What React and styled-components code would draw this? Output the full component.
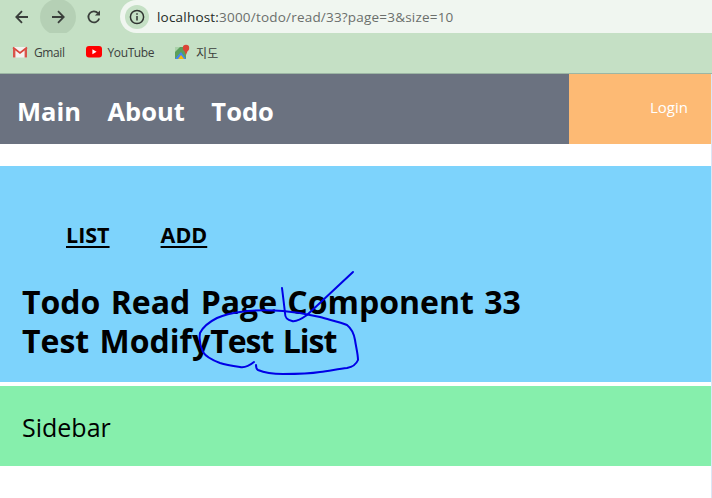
import React from "react";
import styled, { createGlobalStyle } from "styled-components";

const Global = createGlobalStyle`
  html, body { margin: 0; padding: 0; background: #fff; }
  body { width: 712px; height: 498px; overflow: hidden; font-family: "Open Sans", "Noto Sans CJK KR", sans-serif; }
`;
const Page = styled.div`display: flex; flex-direction: column; width: 712px; height: 498px; overflow: hidden;`;
const Toolbar = styled.div`display: flex; align-items: center; height: 33px; background: #c5e0c5; flex: none; padding-left: 4px;`;
const NavBtn = styled.div`
  width: 36px; height: 36px; flex: none; display: flex; align-items: center; justify-content: center;
  border-radius: 50%;
  background: ${p => p.$active ? "#b5d0b5" : "transparent"}; color: #3a3f3b;
`;
const Omni = styled.div`
  display: flex; align-items: center; flex: 1; height: 33px; margin-left: 8px; background: #f0f6f0;
  border-radius: 17px 0 0 17px; padding-left: 5px;
  font-family: "Open Sans", sans-serif; font-size: 13.5px; letter-spacing: 0.2px;
`;
const InfoBadge = styled.div`
  width: 24px; height: 24px; border-radius: 50%; background: #c5e0c5; display: flex; align-items: center; justify-content: center; margin-right: 8px;
`;
const Host = styled.span`color: #262b27;`;
const Rest = styled.span`color: #6b6f6c;`;
const Bookmarks = styled.div`
  display: flex; align-items: center; height: 41px; box-sizing: border-box; padding: 0 0 2px 12px; background: #c5e0c5; flex: none;
  border-bottom: 1px solid #9cb6a4;
`;
const Bookmark = styled.div`
  display: flex; align-items: center; gap: 6px; margin-right: ${p => p.$mr}px; font-size: 12px; color: #3c403d; font-family: "Open Sans", sans-serif; letter-spacing: -0.4px;
`;
const KrLabel = styled.span`font-family: "Noto Sans CJK KR", sans-serif; letter-spacing: 0;`;
const Viewport = styled.div`
  flex: 1; display: flex; flex-direction: column; border-right: 1px solid #dbe6f6; width: 711px;
`;
const Header = styled.header`display: flex; height: 70px; flex: none;`;
const MainNav = styled.nav`
  width: 569px; background: #6b7280; display: flex; align-items: center; gap: 26.5px; padding: 5px 0 0 17px; box-sizing: border-box;
`;
const NavLink = styled.span`color: #fff; font-weight: 700; font-size: 25.5px; line-height: 1;`;
const LoginBox = styled.div`
  flex: 1; background: #fdba74; display: flex; align-items: center; justify-content: flex-end; padding: 0 23px 4px 0;
  color: #fff; font-size: 15px;
`;
const Body = styled.main`
  flex: 1; margin-top: 22px; display: flex; flex-direction: column; gap: 4px;
`;
const Content = styled.section`
  position: relative; height: 216px; background: #7dd3fc; display: flex; flex-direction: column; padding: 0 0 0 22px; box-sizing: border-box;
`;
const SubNav = styled.div`display: flex; gap: 51px; padding: 54px 0 0 44px; height: 83px; box-sizing: border-box;`;
const SubLink = styled.span`color: #000; font-weight: 700; font-size: 21.5px; line-height: 29px; text-decoration: underline; text-decoration-thickness: 2px; text-underline-offset: 3px;`;
const Title = styled.h1`
  margin: 0; color: #000; font-weight: 700; font-size: 32px; line-height: 39px; padding-top: 33px; word-spacing: 2px;
`;
const TightTitle = styled.span`letter-spacing: -1px;`;
const Scribble = styled.svg`position: absolute; left: 0; top: 0; pointer-events: none;`;
const Sidebar = styled.aside`
  height: 80px; background: #86efac; display: flex; align-items: center; padding: 2px 0 0 22px; box-sizing: border-box; font-size: 25px; color: #000;
`;

export default function App() {
  return (
    <Page>
      <Global />
      <Toolbar>
        <NavBtn>
          <svg width="16" height="16" viewBox="0 0 16 16" fill="none" stroke="currentColor" strokeWidth="1.8"><path d="M14 8H2.5M8 2.2 2.3 8 8 13.8" /></svg>
        </NavBtn>
        <NavBtn $active>
          <svg width="16" height="16" viewBox="0 0 16 16" fill="none" stroke="currentColor" strokeWidth="1.8"><path d="M2 8h11.5M8 2.2 13.7 8 8 13.8" /></svg>
        </NavBtn>
        <NavBtn>
          <svg width="16" height="16" viewBox="0 0 16 16" fill="none" stroke="currentColor" strokeWidth="1.8"><path d="M13.2 9.5A5.5 5.5 0 1 1 12 4.2" /><path d="M14 1.5V6.6H8.9" fill="currentColor" stroke="none" /></svg>
        </NavBtn>
        <Omni>
          <InfoBadge>
            <svg width="16" height="16" viewBox="0 0 16 16" fill="none" stroke="#2f3330" strokeWidth="1.5"><circle cx="8" cy="8" r="6.6" /><path d="M8 7v4.6M8 4.2v1.5" /></svg>
          </InfoBadge>
          <Host>localhost:</Host><Rest>3000/todo/read/33?page=3&amp;size=10</Rest>
        </Omni>
      </Toolbar>
      <Bookmarks>
        <Bookmark $mr={21}>
          <svg width="16" height="12" viewBox="0 0 16 12"><path d="M1 1h14v10.5H1z" fill="#f4f2f0" /><path d="M1 1.5 8 7l7-5.5" fill="none" stroke="#d9443a" strokeWidth="1.7" /><path d="M1 1v10.5h2.4V3.5M15 1v10.5h-2.4V3.5" fill="#d9544a" /></svg>
          Gmail
        </Bookmark>
        <Bookmark $mr={21}>
          <svg width="16" height="12" viewBox="0 0 16 12"><rect width="16" height="11.5" rx="3" fill="#f00" /><path d="M6.4 3.3v5l4.2-2.5z" fill="#fff" /></svg>
          YouTube
        </Bookmark>
        <Bookmark $mr={0}>
          <svg width="15" height="16" viewBox="0 0 15 16"><path d="M0 3h11v12H0z" fill="#5b9f5b" /><path d="M0 15 6 8l5 7z" fill="#4285f4" /><path d="M3 15l3-4 3 4z" fill="#fbbc04" /><path d="M0 3h5L0 8z" fill="#a9d2a9" /><circle cx="11" cy="4" r="3.2" fill="#db4437" /><path d="M9 6l2 5 2-5z" fill="#db4437" /></svg>
          <KrLabel>지도</KrLabel>
        </Bookmark>
      </Bookmarks>
      <Viewport>
        <Header>
          <MainNav>
            <NavLink>Main</NavLink>
            <NavLink>About</NavLink>
            <NavLink>Todo</NavLink>
          </MainNav>
          <LoginBox>Login</LoginBox>
        </Header>
        <Body>
          <Content>
            <SubNav>
              <SubLink>LIST</SubLink>
              <SubLink>ADD</SubLink>
            </SubNav>
            <Title>Todo Read Page Component 33<br />Test Modify<TightTitle>Test List</TightTitle></Title>
            <Scribble width="711" height="216" viewBox="0 166 711 216" fill="none" stroke="#0000e6" strokeWidth="2" strokeLinecap="round" strokeLinejoin="round">
              <path d="M353 272C340 284 323 300 307 315C300 320 296 322 292 321C287 320 285 318 285 313C284 304 283 296 282 288" />
              <path d="M254 362C249 366 245 368 240 367C233 366 226 365 220 363C212 360 206 357 203 352C200 346 199 339 200 333C203 327 209 322 217 318C224 315 232 313 240 312C254 310 270 310 283 311C296 312 308 314 320 317C330 320 340 322 347 325C352 329 354 334 355 340C356 347 358 354 358 360C356 365 352 367 347 368C338 369 329 371 320 372C308 374 295 374 283 374C274 374 265 373 258 370C256 369 256 367 256 365" />
            </Scribble>
          </Content>
          <Sidebar>Sidebar</Sidebar>
        </Body>
      </Viewport>
    </Page>
  );
}
